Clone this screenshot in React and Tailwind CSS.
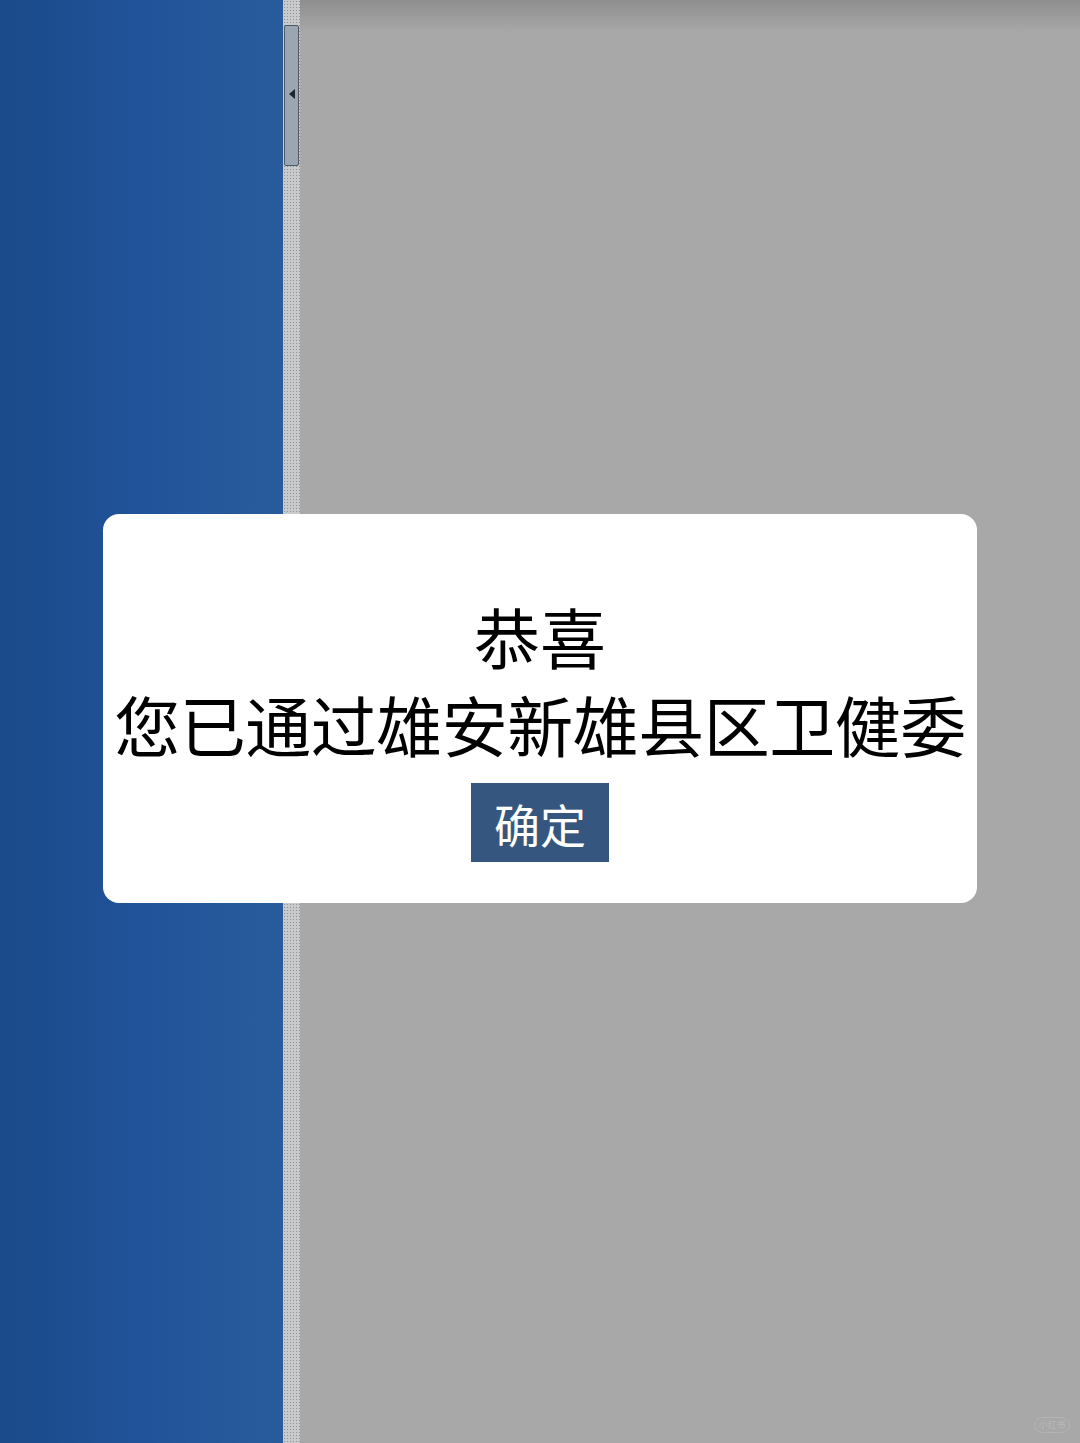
import React from 'react';

const cjk = { fontFamily: '"Noto Sans CJK SC", "Noto Sans", sans-serif' };

export default function App() {
  return (
    <div className="relative w-[1080px] h-[1443px] overflow-hidden flex" style={cjk}>
      {/* left navigation panel */}
      <div className="w-[283px] h-full bg-gradient-to-r from-[#1a4a89] via-[#21539a] to-[#285c9b]" />

      {/* splitter with collapse tab */}
      <div className="relative w-[17px] h-full bg-[#c9cacb] bg-[radial-gradient(circle,#8d8f92_0.8px,transparent_1px)] bg-[length:3px_3px]">
        <div className="absolute left-[1px] top-[25px] w-[15px] h-[141px] rounded-[2px] border border-[#4d5866] bg-[#9ba6b2] flex items-center justify-center">
          <div className="w-0 h-0 border-y-[5px] border-y-transparent border-r-[6px] border-r-[#1c2633] -mt-[4px]" />
        </div>
      </div>

      {/* main content area */}
      <div className="flex-1 h-full flex flex-col bg-[#a8a8a8]">
        <div className="h-[32px] bg-gradient-to-b from-[#8e8e8e] to-[#a8a8a8]" />
        <div className="flex-1" />
        <div className="flex justify-end pr-[10px] pb-[10px]">
          <div className="w-[36px] h-[16px] rounded-full border border-[#b4b4b4] text-[9px] text-[#b8b8b8] flex items-center justify-center">
            小红书
          </div>
        </div>
      </div>

      {/* dialog */}
      <div className="absolute left-[103px] top-[514px] w-[874px] h-[389px] bg-white rounded-[16px] flex flex-col items-center pt-[77px]">
        <p className="text-[66px] leading-[88px] text-black">恭喜</p>
        <p className="text-[66px] leading-[88px] text-black tracking-[-0.5px]">您已通过雄安新雄县区卫健委</p>
        <button className="mt-[16px] w-[138px] h-[79px] bg-[#35577f] text-white text-[46px] leading-none flex items-center justify-center">
          确定
        </button>
      </div>
    </div>
  );
}
